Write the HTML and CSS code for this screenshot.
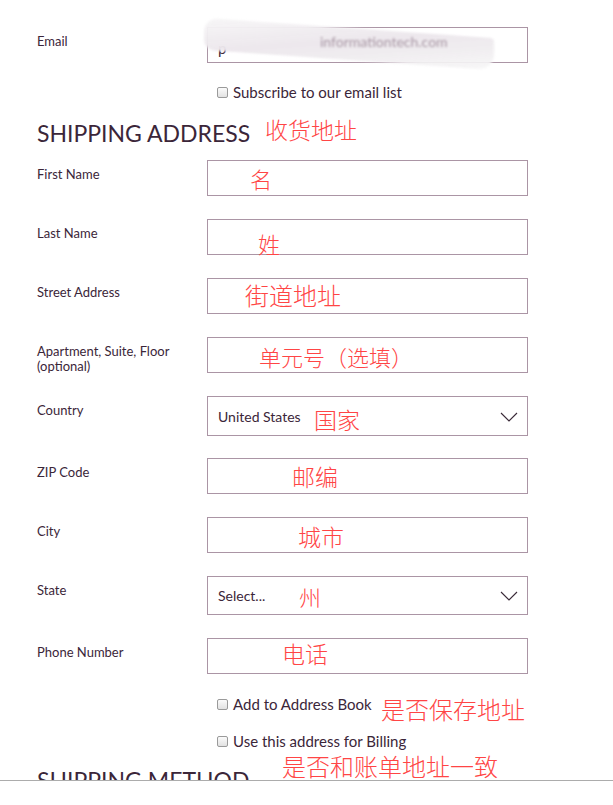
FILE: index.html
```html
<!DOCTYPE html>
<html lang="en">
<head>
<meta charset="utf-8">
<title>Shipping Address</title>
<link rel="stylesheet" href="styles.css">
</head>
<body>
<div class="screen">
  <div class="page">
    <div class="form">
      <div class="row">
        <div class="label">Email</div>
        <div class="field email-field">
          <span class="val">p</span>
          <span class="smear"></span>
          <span class="ghost">informationtech.com</span>
        </div>
      </div>
      <div class="check first-check"><span class="box"></span><span>Subscribe to our email list</span></div>

      <h2 class="heading">SHIPPING ADDRESS</h2>

      <div class="row row-first"><div class="label">First Name</div><div class="field"></div></div>
      <div class="row"><div class="label">Last Name</div><div class="field"></div></div>
      <div class="row"><div class="label">Street Address</div><div class="field"></div></div>
      <div class="row"><div class="label two">Apartment, Suite, Floor<br>(optional)</div><div class="field"></div></div>
      <div class="row row-tight"><div class="label">Country</div>
        <div class="field select"><span class="val">United States</span>
          <svg class="chev" width="18" height="10" viewBox="0 0 18 10"><path d="M1 1 L9 9 L17 1" fill="none" stroke="#3a2a38" stroke-width="1.1"/></svg>
        </div>
      </div>
      <div class="row row-tight"><div class="label">ZIP Code</div><div class="field"></div></div>
      <div class="row"><div class="label">City</div><div class="field"></div></div>
      <div class="row"><div class="label">State</div>
        <div class="field select state"><span class="val">Select...</span>
          <svg class="chev" width="18" height="10" viewBox="0 0 18 10"><path d="M1 1 L9 9 L17 1" fill="none" stroke="#3a2a38" stroke-width="1.1"/></svg>
        </div>
      </div>
      <div class="row"><div class="label">Phone Number</div><div class="field"></div></div>

      <div class="check add-check"><span class="box"></span><span>Add to Address Book</span></div>
      <div class="check use-check"><span class="box"></span><span>Use this address for Billing</span></div>

      <h2 class="heading method">SHIPPING METHOD</h2>
    </div>
  </div>

  <span class="note n-addr">收货地址</span>
  <span class="note n-first">名</span>
  <span class="note n-last">姓</span>
  <span class="note n-street">街道地址</span>
  <span class="note n-apt">单元号（选填）</span>
  <span class="note n-country">国家</span>
  <span class="note n-zip">邮编</span>
  <span class="note n-city">城市</span>
  <span class="note n-state">州</span>
  <span class="note n-phone">电话</span>
  <span class="note n-save">是否保存地址</span>
  <span class="note n-bill">是否和账单地址一致</span>
</div>
</body>
</html>
```

FILE: styles.css
```css
html, body {
  margin: 0;
  padding: 0;
  background: #ffffff;
}

body {
  font-family: Lato, "Liberation Sans", sans-serif;
  color: #3b2639;
}

.screen {
  position: relative;
  width: 613px;
  height: 805px;
}

.page {
  width: 613px;
  height: 780px;
  overflow: hidden;
  border-bottom: 1px solid #acacac;
}

.form {
  padding: 27px 0 0 37px;
}

.row {
  display: grid;
  grid-template-columns: 170px 321px;
  align-items: start;
  margin-top: 23px;
}

.row:first-child {
  margin-top: 0;
}

.row-first {
  margin-top: 13px;
}

.row-tight {
  margin-top: 22px;
}

.label {
  font-size: 13px;
  line-height: 16px;
  padding-top: 6px;
}

.label.two {
  line-height: 15px;
  padding-top: 7px;
}

.field {
  position: relative;
  height: 36px;
  border: 1px solid #ab95a5;
  box-sizing: border-box;
  display: flex;
  align-items: center;
  padding: 0 10px;
  font-size: 14px;
}

.select {
  height: 40px;
  justify-content: space-between;
  padding-right: 9px;
}

.select.state {
  height: 39px;
}

.val {
  color: #3b2639;
}

.chev {
  display: block;
  margin-top: 1px;
}

.email-field .val {
  margin-top: 6px;
  font-size: 15px;
}

.email-field .ghost {
  position: absolute;
  left: 112px;
  top: 5px;
  font-size: 14px;
  color: #a897a4;
  filter: blur(1.2px);
}

.email-field .smear {
  position: absolute;
  left: -4px;
  top: 0px;
  width: 290px;
  height: 32px;
  border-radius: 14px 4px 16px 10px;
  background: linear-gradient(172deg, rgba(247,246,247,0.97) 0%, rgba(236,231,236,0.96) 45%, rgba(240,237,240,0.95) 70%, rgba(247,247,247,0.9) 100%);
  filter: blur(1.2px);
  transform: skewY(4deg);
}

.check {
  display: flex;
  align-items: center;
  gap: 5px;
  margin-left: 180px;
  font-size: 15px;
  line-height: 18px;
}

.box {
  width: 9px;
  height: 9px;
  border: 1px solid #9a9a9a;
  border-radius: 2px;
  background: linear-gradient(#fbfbfb, #e2e2e2);
  flex: none;
}

.first-check {
  margin-top: 20px;
}

.add-check {
  margin-top: 21px;
}

.use-check {
  margin-top: 19px;
}

.heading {
  margin: 18px 0 0 0;
  font-size: 23px;
  line-height: 28px;
  font-weight: 400;
  letter-spacing: 0;
  color: #3b2639;
}

.heading.method {
  margin-top: 16px;
}

.note {
  position: absolute;
  font-family: "Noto Sans CJK SC", sans-serif;
  font-weight: 300;
  color: #ff4545;
  line-height: 1;
  white-space: nowrap;
}

.n-addr { left: 265px; top: 118px; font-size: 23px; }
.n-first { left: 250px; top: 167px; font-size: 22px; }
.n-last { left: 258px; top: 232px; font-size: 22px; }
.n-street { left: 245px; top: 283px; font-size: 24px; }
.n-apt { left: 259px; top: 345px; font-size: 22px; }
.n-country { left: 314px; top: 408px; font-size: 23px; }
.n-zip { left: 292px; top: 465px; font-size: 23px; }
.n-city { left: 298px; top: 525px; font-size: 23px; }
.n-state { left: 299px; top: 585px; font-size: 22px; }
.n-phone { left: 282px; top: 642px; font-size: 23px; }
.n-save { left: 381px; top: 697px; font-size: 24px; }
.n-bill { left: 282px; top: 754px; font-size: 24px; }
```
